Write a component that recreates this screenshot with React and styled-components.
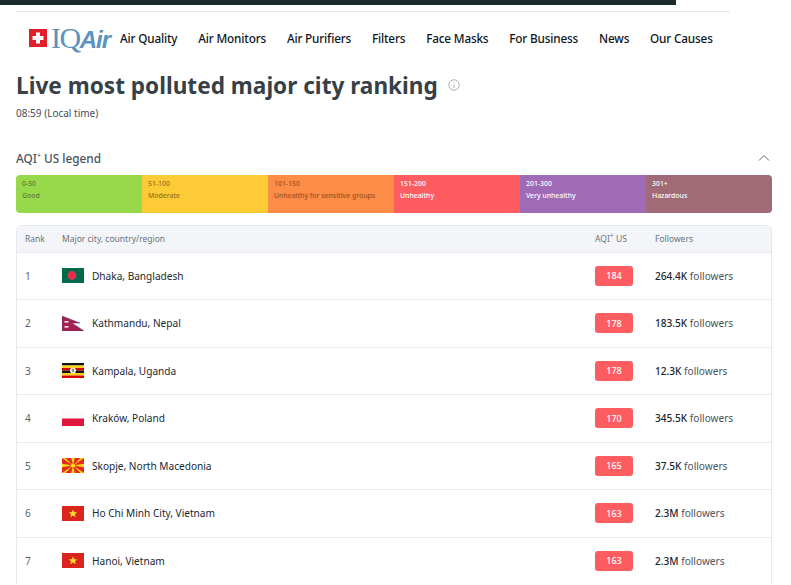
import React from 'react';
import styled, { createGlobalStyle } from 'styled-components';

const GlobalStyle = createGlobalStyle`
  html, body { margin: 0; padding: 0; background: #fff; overflow: hidden; }
  body { font-family: "Noto Sans", "Open Sans", sans-serif; color: #2b3440; }
`;

const navItems = ['Air Quality', 'Air Monitors', 'Air Purifiers', 'Filters', 'Face Masks', 'For Business', 'News', 'Our Causes'];

const legend = [
  { range: '0-50', label: 'Good', bg: '#98d94c', fg: '#5f7a35' },
  { range: '51-100', label: 'Moderate', bg: '#fdcb35', fg: '#8f7420' },
  { range: '101-150', label: 'Unhealthy for sensitive groups', bg: '#fd8c46', fg: '#985225' },
  { range: '151-200', label: 'Unhealthy', bg: '#fd5d61', fg: '#ffffff' },
  { range: '201-300', label: 'Very unhealthy', bg: '#9f6bb6', fg: '#ffffff' },
  { range: '301+', label: 'Hazardous', bg: '#a06a77', fg: '#ffffff' },
];

const BangladeshFlag = () => (
  <svg width="22" height="15" viewBox="0 0 22 15">
    <rect width="22" height="15" fill="#046a4e" />
    <circle cx="10" cy="7.5" r="4.4" fill="#e8304a" />
  </svg>
);

const NepalFlag = () => (
  <svg width="22" height="15" viewBox="0 0 22 15">
    <path d="M0 0 L18 7 H10 L22 15 H0 Z" fill="#a81e4e" stroke="#3d3f7a" strokeWidth="0.5" />
    <rect x="2.5" y="5" width="4" height="1.6" fill="#f5e3ea" />
    <rect x="2.5" y="10" width="4" height="1.6" fill="#f5e3ea" />
  </svg>
);

const UgandaFlag = () => (
  <svg width="22" height="15" viewBox="0 0 22 15">
    <rect width="22" height="2.5" fill="#111" />
    <rect y="2.5" width="22" height="2.5" fill="#fcd116" />
    <rect y="5" width="22" height="2.5" fill="#d90000" />
    <rect y="7.5" width="22" height="2.5" fill="#111" />
    <rect y="10" width="22" height="2.5" fill="#fcd116" />
    <rect y="12.5" width="22" height="2.5" fill="#d90000" />
    <circle cx="11" cy="7.5" r="3" fill="#f3efe4" />
    <rect x="10.4" y="5.8" width="1.2" height="3.4" fill="#555" />
  </svg>
);

const PolandFlag = () => (
  <svg width="22" height="15" viewBox="0 0 22 15">
    <rect width="22" height="7.5" fill="#fbfbfb" />
    <rect y="7.5" width="22" height="7.5" fill="#e0173d" />
  </svg>
);

const MacedoniaFlag = () => (
  <svg width="22" height="15" viewBox="0 0 22 15">
    <rect width="22" height="15" fill="#e5291f" />
    <path
      d="M0 0 H3.4 L11 7.5 L18.6 0 H22 L11 7.5 L22 15 H18.6 L11 7.5 L3.4 15 H0 L11 7.5 Z M9.2 0 H12.8 L11 7.5 Z M9.2 15 H12.8 L11 7.5 Z M0 5.8 V9.2 L11 7.5 Z M22 5.8 V9.2 L11 7.5 Z"
      fill="#f9d616"
    />
    <circle cx="11" cy="7.5" r="2.6" fill="#f9d616" stroke="#e5291f" strokeWidth="0.7" />
  </svg>
);

const VietnamFlag = () => (
  <svg width="22" height="15" viewBox="0 0 22 15">
    <rect width="22" height="15" fill="#da251d" />
    <path d="M11 3.4 L12.2 6.3 L15.3 6.4 L12.9 8.3 L13.7 11.3 L11 9.6 L8.3 11.3 L9.1 8.3 L6.7 6.4 L9.8 6.3 Z" fill="#ffdd2e" />
  </svg>
);

const rows = [
  { rank: 1, city: 'Dhaka, Bangladesh', Flag: BangladeshFlag, aqi: 184, count: '264.4K' },
  { rank: 2, city: 'Kathmandu, Nepal', Flag: NepalFlag, aqi: 178, count: '183.5K' },
  { rank: 3, city: 'Kampala, Uganda', Flag: UgandaFlag, aqi: 178, count: '12.3K' },
  { rank: 4, city: 'Kraków, Poland', Flag: PolandFlag, aqi: 170, count: '345.5K' },
  { rank: 5, city: 'Skopje, North Macedonia', Flag: MacedoniaFlag, aqi: 165, count: '37.5K' },
  { rank: 6, city: 'Ho Chi Minh City, Vietnam', Flag: VietnamFlag, aqi: 163, count: '2.3M' },
  { rank: 7, city: 'Hanoi, Vietnam', Flag: VietnamFlag, aqi: 163, count: '2.3M' },
];

export default function App() {
  return (
    <Page>
      <GlobalStyle />
      <TopBar />
      <TopRule />
      <Nav>
        <Logo>
          <svg width="18" height="18" viewBox="0 0 18 18">
            <rect width="18" height="18" fill="#e0202c" />
            <path d="M7 3.5 H11 V7 H14.5 V11 H11 V14.5 H7 V11 H3.5 V7 H7 Z" fill="#fff" />
          </svg>
          <LogoText>IQ<LogoAir>Air</LogoAir></LogoText>
        </Logo>
        <NavList>
          {navItems.map((item) => <NavItem key={item}>{item}</NavItem>)}
        </NavList>
      </Nav>
      <Main>
        <TitleRow>
          <Title>Live most polluted major city ranking</Title>
          <svg width="12" height="12" viewBox="0 0 12 12" fill="none" stroke="#a9b1b8">
            <circle cx="6" cy="6" r="5.2" />
            <path d="M6 5.4 V9 M6 3 V4" />
          </svg>
        </TitleRow>
        <LocalTime>08:59 (Local time)</LocalTime>
        <LegendHead>
          <LegendTitle>AQI<Sup>+</Sup> US legend</LegendTitle>
          <svg width="12" height="8" viewBox="0 0 12 8" fill="none" stroke="#5d6670" strokeWidth="1">
            <path d="M1 6.5 L6 1.5 L11 6.5" />
          </svg>
        </LegendHead>
        <LegendBar>
          {legend.map((item) => (
            <LegendCell key={item.range} $bg={item.bg} $fg={item.fg}>
              <span>{item.range}</span>
              <span>{item.label}</span>
            </LegendCell>
          ))}
        </LegendBar>
        <Table>
          <HeadRow>
            <span>Rank</span>
            <span>Major city, country/region</span>
            <span>AQI<Sup>+</Sup> US</span>
            <span>Followers</span>
          </HeadRow>
          {rows.map(({ rank, city, Flag, aqi, count }) => (
            <Row key={rank}>
              <Rank>{rank}</Rank>
              <City><Flag /><span>{city}</span></City>
              <Badge>{aqi}</Badge>
              <Followers><strong>{count}</strong> followers</Followers>
            </Row>
          ))}
        </Table>
      </Main>
    </Page>
  );
}

const Page = styled.div`
  width: 791px;
  height: 585px;
  overflow: hidden;
`;

const TopBar = styled.div`
  width: 676px;
  height: 5px;
  background: #1c2b2d;
`;

const TopRule = styled.div`
  width: 714px;
  height: 1px;
  margin: 6px 0 0 16px;
  background: #e4e6e8;
`;

const Nav = styled.nav`
  display: flex;
  align-items: center;
  height: 52px;
  padding-left: 29px;
`;

const Logo = styled.div`
  display: flex;
  align-items: center;
  gap: 4px;
  width: 91px;
`;

const LogoText = styled.span`
  font-family: "Liberation Serif", serif;
  font-size: 30px;
  line-height: 1;
  letter-spacing: -1.5px;
  color: #5a93bf;
`;

const LogoAir = styled.span`
  font-family: "Liberation Sans", sans-serif;
  font-style: italic;
  font-weight: 700;
  font-size: 24px;
  letter-spacing: -0.9px;
`;

const NavList = styled.div`
  display: flex;
  gap: 20.9px;
`;

const NavItem = styled.span`
  font-size: 11.75px;
  letter-spacing: -0.17px;
  font-weight: 500;
  color: #10151c;
`;

const Main = styled.main`
  padding: 0 19px 0 16px;
`;

const TitleRow = styled.div`
  display: flex;
  align-items: center;
  gap: 10px;
  height: 32px;
  margin-top: 5px;
`;

const Title = styled.h1`
  margin: 0;
  font-size: 22.6px;
  font-weight: 700;
  color: #373f47;
`;

const LocalTime = styled.div`
  margin-top: 5px;
  font-size: 10px;
  line-height: 14px;
  color: #454d56;
`;

const LegendHead = styled.div`
  display: flex;
  align-items: center;
  justify-content: space-between;
  height: 18px;
  margin-top: 29px;
  padding-right: 2px;
`;

const LegendTitle = styled.div`
  font-size: 11.8px;
  font-weight: 500;
  color: #4a525b;
`;

const Sup = styled.sup`
  font-size: 7px;
  line-height: 0;
`;

const LegendBar = styled.div`
  display: grid;
  grid-template-columns: repeat(6, 1fr);
  height: 38px;
  margin-top: 8px;
  border-radius: 4px;
  overflow: hidden;
`;

const LegendCell = styled.div`
  display: flex;
  flex-direction: column;
  gap: 1px;
  padding: 3px 0 0 6px;
  font-size: 6.9px;
  font-weight: 500;
  line-height: 11px;
  background: ${(p) => p.$bg};
  color: ${(p) => p.$fg};
`;

const Table = styled.div`
  margin-top: 12px;
  border: 1px solid #e6e9ec;
  border-bottom: none;
  border-radius: 6px 6px 0 0;
`;

const columns = `
  display: grid;
  grid-template-columns: 37px 533px 60px 1fr;
  align-items: center;
  padding-left: 8px;
`;

const HeadRow = styled.div`
  ${columns}
  height: 25.6px;
  background: #f3f5f8;
  border-radius: 6px 6px 0 0;
  font-size: 8.5px;
  color: #6b737c;
`;

const Row = styled.div`
  ${columns}
  height: 46.5px;
  border-top: 1px solid #e8eaed;
  font-size: 10.1px;
  color: #20272f;
`;

const Rank = styled.span`
  color: #5b636c;
`;

const City = styled.div`
  display: flex;
  align-items: center;
  gap: 8px;
`;

const Badge = styled.div`
  display: flex;
  align-items: center;
  justify-content: center;
  width: 38px;
  height: 20px;
  border-radius: 3px;
  background: #fd5d61;
  color: #fff;
  font-size: 9px;
  font-weight: 500;
`;

const Followers = styled.div`
  color: #4a525b;
  strong {
    font-weight: 500;
    color: #20272f;
  }
`;
